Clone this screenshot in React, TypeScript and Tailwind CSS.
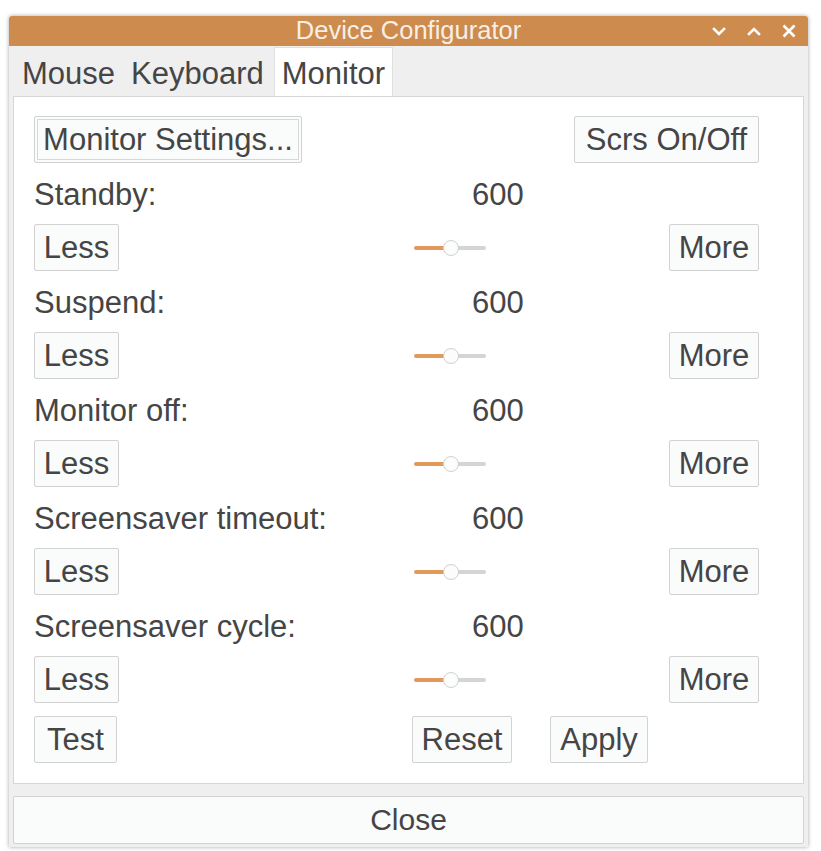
import React from "react";

const font = { fontFamily: '"Liberation Sans", Arial, sans-serif' };

function Btn({ children, className = "" }: { children: React.ReactNode; className?: string }) {
  return (
    <div
      className={`flex h-[47px] items-center justify-center rounded-[2px] border border-[#d2d2d2] bg-[#fafbfb] text-[31px] leading-none text-[#454545] ${className}`}
    >
      {children}
    </div>
  );
}

function Slider() {
  return (
    <div className="relative flex h-[16px] w-[72px] items-center">
      <div className="h-[4px] w-[30px] rounded-l-full bg-[#e2995c]" />
      <div className="h-[4px] flex-1 rounded-r-full bg-[#d4d4d4]" />
      <div className="absolute left-[29px] top-0 h-[16px] w-[16px] rounded-full border border-[#d0d0d0] bg-[#fbfcfc]" />
    </div>
  );
}

function Setting({ label }: { label: string }) {
  return (
    <>
      <div className="flex h-[61px] items-center text-[31px] leading-none text-[#454545]">
        <div className="w-[438px] pt-[2px]">{label}</div>
        <div className="pt-[2px]">600</div>
      </div>
      <div className="flex h-[47px] items-center">
        <div className="w-[380px]">
          <Btn className="w-[85px]">Less</Btn>
        </div>
        <Slider />
        <div className="flex-1" />
        <Btn className="w-[90px]">More</Btn>
      </div>
    </>
  );
}

function Chevron({ up }: { up?: boolean }) {
  return (
    <svg width="16" height="12" viewBox="0 0 16 12" fill="none" stroke="#ffffff" strokeWidth="2.6" strokeLinecap="square">
      {up ? <path d="M3 9 L8 4 L13 9" /> : <path d="M3 4 L8 9 L13 4" />}
    </svg>
  );
}

export default function App() {
  return (
    <div className="min-h-screen bg-white pl-[9px] pt-[16px]" style={font}>
      <div className="w-[799px] rounded-t-[3px] shadow-[0_0_4px_rgba(0,0,0,0.35)]">
        <div className="relative flex h-[30px] items-center justify-center rounded-t-[3px] bg-[#cd8b4e]">
          <span className="text-[25.5px] leading-none text-[#f7efe6]">Device Configurator</span>
          <div className="absolute right-[11px] top-[7px] flex items-center gap-[19px]">
            <Chevron />
            <Chevron up />
            <svg width="16" height="16" viewBox="0 0 16 16" fill="none" stroke="#ffffff" strokeWidth="2.6">
              <path d="M2.5 2.5 L13.5 13.5 M13.5 2.5 L2.5 13.5" />
            </svg>
          </div>
        </div>
        <div className="bg-[#efefef] px-[4px] pb-[3px]">
          <div className="flex h-[50px] items-end text-[31px] leading-none text-[#454545]">
            <div className="flex h-[50px] items-center pl-[9px] pr-[16px] pt-[4px]">Mouse</div>
            <div className="flex h-[50px] items-center pr-[10px] pt-[4px]">Keyboard</div>
            <div className="flex h-[49px] items-center border-x border-t border-[#e0e0e0] bg-white px-[7px] pt-[2px]">Monitor</div>
          </div>
          <div className="h-[688px] border border-[#d6d6d6] bg-white pl-[20px] pr-[44px] pt-[19px]">
            <div className="flex h-[47px] items-center justify-between">
              <div className="h-[47px] w-[268px] rounded-[2px] border border-[#d2d2d2] bg-[#fafbfb] p-[2px]">
                <div className="flex h-full items-center justify-center border border-[#d8d8d8] text-[31px] leading-none text-[#454545]">
                  Monitor Settings...
                </div>
              </div>
              <Btn className="w-[185px]">Scrs On/Off</Btn>
            </div>
            <Setting label="Standby:" />
            <Setting label="Suspend:" />
            <Setting label="Monitor off:" />
            <Setting label="Screensaver timeout:" />
            <Setting label="Screensaver cycle:" />
            <div className="mt-[13px] flex h-[47px] items-center">
              <div className="w-[378px]">
                <Btn className="w-[83px]">Test</Btn>
              </div>
              <Btn className="w-[100px]">Reset</Btn>
              <Btn className="ml-[38px] w-[98px]">Apply</Btn>
            </div>
          </div>
          <div className="mt-[12px] flex h-[48px] items-center justify-center rounded-[2px] border border-[#d2d2d2] bg-[#fafbfb] text-[30px] leading-none text-[#454545]">
            Close
          </div>
        </div>
      </div>
    </div>
  );
}
